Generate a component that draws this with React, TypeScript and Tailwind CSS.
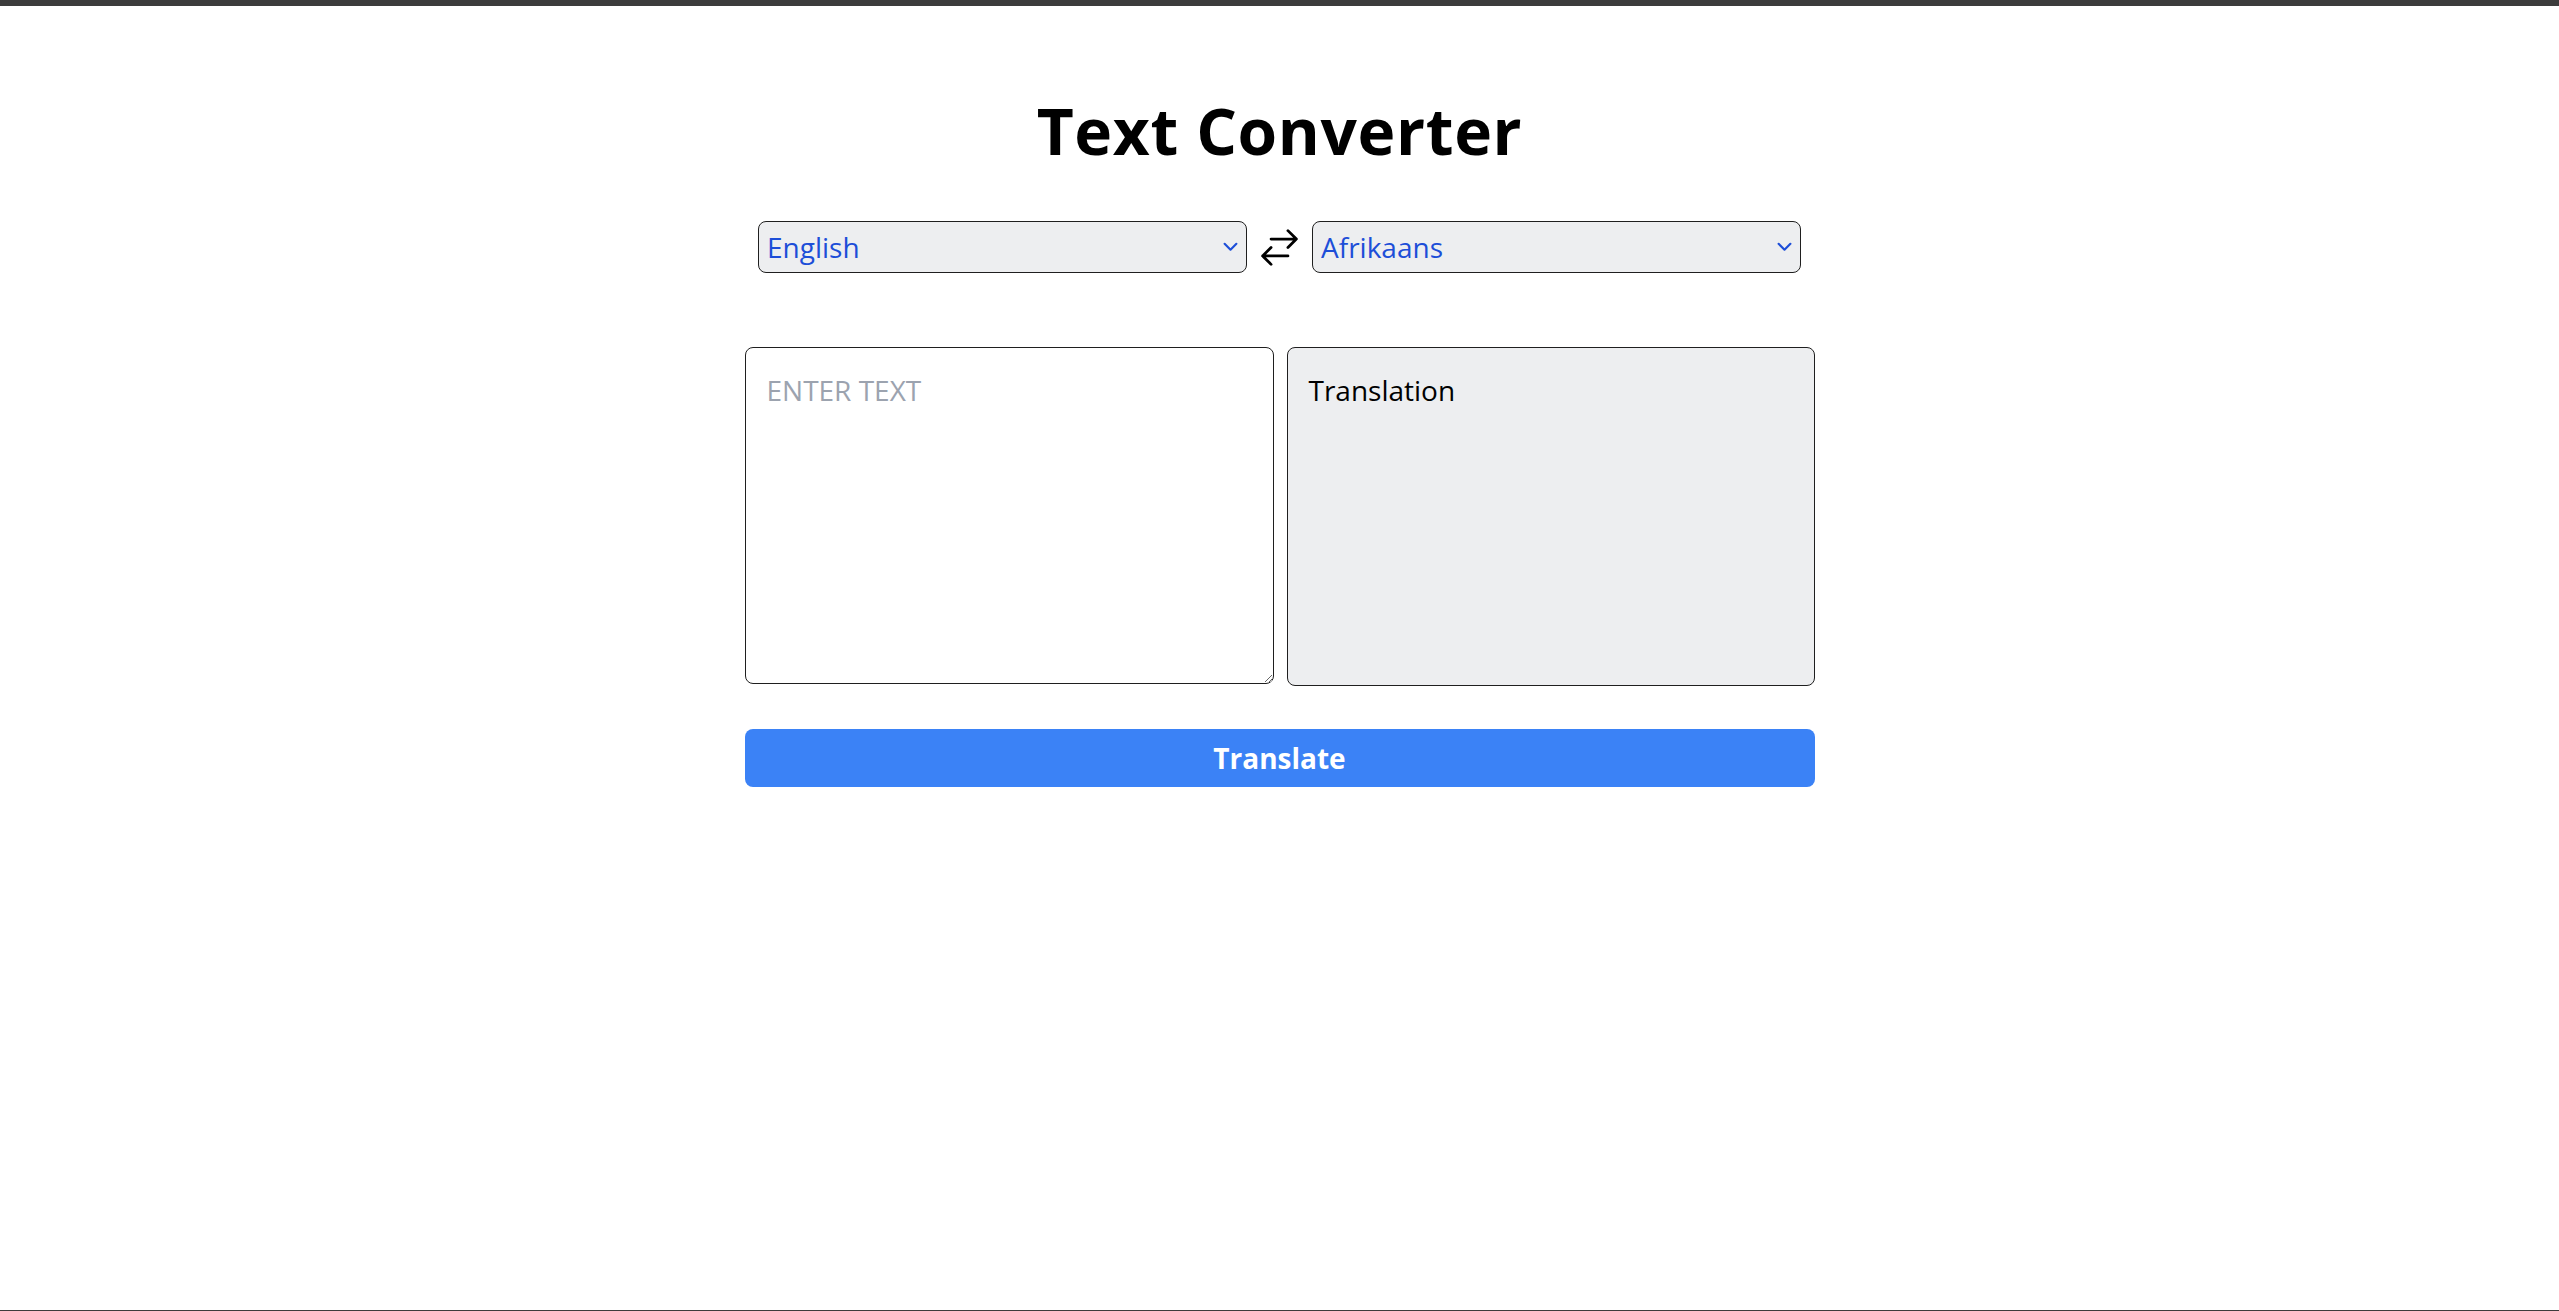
import { useState } from 'react'

const languages = ['English', 'Afrikaans', 'French', 'German', 'Spanish', 'Italian', 'Portuguese']

function Chevron() {
  return (
    <svg className="pointer-events-none absolute right-[9px] top-1/2 -translate-y-1/2 w-[15px] h-[10px] text-[#1d4ed8]" viewBox="0 0 14 9" fill="none" stroke="currentColor" strokeWidth={2} strokeLinecap="round" strokeLinejoin="round">
      <path d="M1.5 1.5 7 7l5.5-5.5" />
    </svg>
  )
}

export default function App() {
  const [from, setFrom] = useState('English')
  const [to, setTo] = useState('Afrikaans')
  const [text, setText] = useState('')

  const swap = () => {
    setFrom(to)
    setTo(from)
  }

  return (
    <div
      className="h-screen box-border border-t-[6px] border-b border-[#3c3c3c] bg-white text-black"
      style={{ fontFamily: '"Open Sans", "Noto Sans", sans-serif' }}
    >
      <div className="mx-auto w-[1070px] pt-[86px]">
        <h1 className="text-center text-[64px] font-bold leading-[77px] tracking-[0.01em]">Text Converter</h1>

        {/* Language selectors */}
        <div className="mx-auto mt-[52px] flex w-[1043px] items-center gap-[10px]">
          <div className="relative flex-1">
            <select
              value={from}
              onChange={(e) => setFrom(e.target.value)}
              className="block w-full h-[52px] appearance-none rounded-[8px] border border-[#1f1f1f] bg-[#edeef0] pl-[8px] pr-8 text-[28px] text-[#1d4ed8] outline-none"
            >
              {languages.map((l) => (
                <option key={l} value={l}>{l}</option>
              ))}
            </select>
            <Chevron />
          </div>
          <button onClick={swap} className="shrink-0">
            <svg className="w-[45px] h-[45px]" viewBox="0 0 24 24" fill="none" stroke="black" strokeWidth={1.5} strokeLinecap="round" strokeLinejoin="round">
              <path d="M7.5 21 3 16.5m0 0L7.5 12M3 16.5h13.5m0-13.5L21 7.5m0 0L16.5 12M21 7.5H7.5" />
            </svg>
          </button>
          <div className="relative flex-1">
            <select
              value={to}
              onChange={(e) => setTo(e.target.value)}
              className="block w-full h-[52px] appearance-none rounded-[8px] border border-[#1f1f1f] bg-[#edeef0] pl-[8px] pr-8 text-[28px] text-[#1d4ed8] outline-none"
            >
              {languages.map((l) => (
                <option key={l} value={l}>{l}</option>
              ))}
            </select>
            <Chevron />
          </div>
        </div>

        {/* Input / output */}
        <div className="mt-[74px] flex items-start gap-[13px]">
          <textarea
            value={text}
            onChange={(e) => setText(e.target.value)}
            placeholder="ENTER TEXT"
            className="block w-[529px] h-[337px] rounded-[8px] border border-[#1f1f1f] bg-white p-[21px] text-[28px] leading-[42px] outline-none placeholder:text-[#9ca3af]"
          />
          <div className="flex-1 h-[339px] rounded-[8px] border border-[#1f1f1f] bg-[#edeef0] p-[21px] text-[28px] leading-[42px]">
            Translation
          </div>
        </div>

        <button className="mt-[43px] block w-full h-[58px] rounded-[8px] bg-[#3b82f6] text-[28px] font-bold text-white">
          Translate
        </button>
      </div>
    </div>
  )
}
